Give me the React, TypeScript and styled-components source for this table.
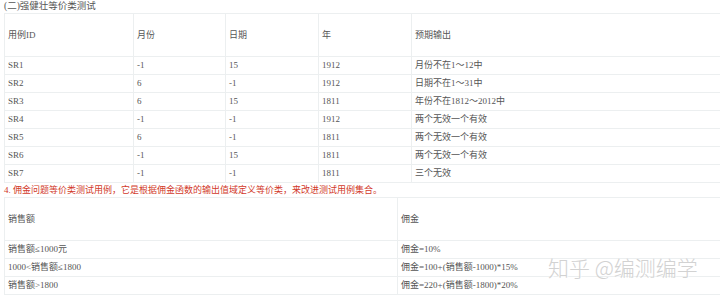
import styled, { createGlobalStyle } from "styled-components";

const Global = createGlobalStyle`
  html, body {
    margin: 0;
    padding: 0;
    background: #fff;
    overflow: hidden;
  }
  body {
    font-family: "Liberation Serif", "Noto Sans CJK SC", serif;
    font-size: 9px;
    color: #555;
  }
`;

const strongRows = [
  ["SR1", "-1", "15", "1912", "月份不在1～12中"],
  ["SR2", "6", "-1", "1912", "日期不在1～31中"],
  ["SR3", "6", "15", "1811", "年份不在1812～2012中"],
  ["SR4", "-1", "-1", "1912", "两个无效一个有效"],
  ["SR5", "6", "-1", "1811", "两个无效一个有效"],
  ["SR6", "-1", "15", "1811", "两个无效一个有效"],
  ["SR7", "-1", "-1", "1811", "三个无效"],
];

const commissionRows = [
  ["销售额≤1000元", "佣金=10%"],
  ["1000<销售额≤1800", "佣金=100+(销售额-1000)*15%"],
  ["销售额>1800", "佣金=220+(销售额-1800)*20%"],
];

export default function App() {
  return (
    <>
      <Global />
      <Page>
        <Title>(二)强健壮等价类测试</Title>
        <Table>
          <colgroup>
            <col style={{ width: 129 }} />
            <col style={{ width: 92 }} />
            <col style={{ width: 93 }} />
            <col style={{ width: 93 }} />
            <col />
          </colgroup>
          <tbody>
            <tr>
              <HeadCell>用例ID</HeadCell>
              <HeadCell>月份</HeadCell>
              <HeadCell>日期</HeadCell>
              <HeadCell>年</HeadCell>
              <HeadCell>预期输出</HeadCell>
            </tr>
            {strongRows.map((row) => (
              <tr key={row[0]}>
                {row.map((v, i) => (
                  <Cell key={i}>{v}</Cell>
                ))}
              </tr>
            ))}
          </tbody>
        </Table>
        <Note>4. 佣金问题等价类测试用例，它是根据佣金函数的输出值域定义等价类，来改进测试用例集合。</Note>
        <Table>
          <colgroup>
            <col style={{ width: 393 }} />
            <col />
          </colgroup>
          <tbody>
            <tr>
              <HeadCell>销售额</HeadCell>
              <HeadCell>佣金</HeadCell>
            </tr>
            {commissionRows.map((row) => (
              <tr key={row[0]}>
                <Cell>{row[0]}</Cell>
                <Cell>{row[1]}</Cell>
              </tr>
            ))}
          </tbody>
        </Table>
        <Watermark>知乎 @编测编学</Watermark>
      </Page>
    </>
  );
}

const Page = styled.div`
  position: relative;
  width: 720px;
  height: 297px;
  padding-left: 4px;
  box-sizing: border-box;
  overflow: hidden;
`;

const Title = styled.div`
  height: 13px;
  line-height: 13px;
  font-size: 9.5px;
  color: #555;
`;

const Table = styled.table`
  width: 730px;
  border-collapse: collapse;
  table-layout: fixed;
`;

const Cell = styled.td`
  height: 17px;
  padding: 0 3px;
  line-height: 17px;
  border: 1px solid #eceff0;
  font-size: 9px;
  color: #555;
  white-space: nowrap;
  vertical-align: middle;
`;

const HeadCell = styled(Cell)`
  height: 42px;
  line-height: 42px;
`;

const Note = styled.div`
  height: 14px;
  line-height: 14px;
  font-size: 9px;
  color: #d23a2a;
  white-space: nowrap;
`;

const Watermark = styled.div`
  position: absolute;
  left: 548px;
  top: 253px;
  font-family: "Noto Sans CJK SC", sans-serif;
  font-weight: 300;
  font-size: 21px;
  line-height: 28px;
  color: #d2d2d2;
  text-shadow: 1px 1px 1px rgba(255, 255, 255, 0.9);
  white-space: nowrap;
  pointer-events: none;
`;
